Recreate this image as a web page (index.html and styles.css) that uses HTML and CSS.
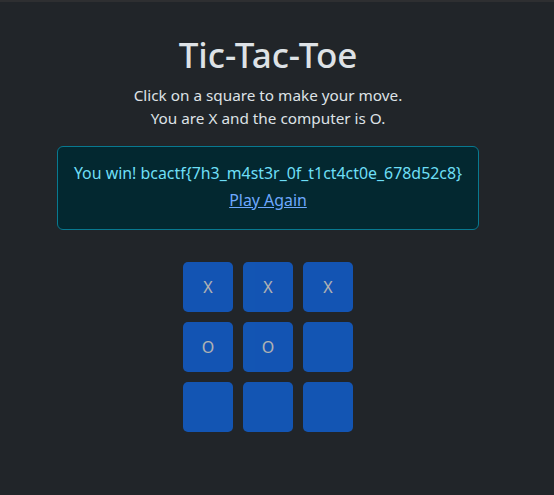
FILE: index.html
```html
<!DOCTYPE html>
<html>
<head>
<meta charset="utf-8">
<link rel="stylesheet" href="styles.css">
</head>
<body>
<div class="page">
  <h1 class="title">Tic-Tac-Toe</h1>
  <p class="lead">Click on a square to make your move.<br>You are X and the computer is O.</p>
  <div class="alert">
    <div>You win! bcactf{7h3_m4st3r_0f_t1ct4ct0e_678d52c8}</div>
    <a href="#" class="again">Play Again</a>
  </div>
  <div class="board">
    <button class="cell" disabled>X</button>
    <button class="cell" disabled>X</button>
    <button class="cell" disabled>X</button>
    <button class="cell" disabled>O</button>
    <button class="cell" disabled>O</button>
    <button class="cell" disabled></button>
    <button class="cell" disabled></button>
    <button class="cell" disabled></button>
    <button class="cell" disabled></button>
  </div>
</div>
</body>
</html>
```
FILE: styles.css
```css
html, body {
  margin: 0;
  height: 100%;
}
body {
  background: #212529;
  color: #dee2e6;
  font-family: "Noto Sans", "DejaVu Sans", sans-serif;
  font-size: 16px;
  line-height: 1.5;
  border-top: 2px solid #2e2f31;
  box-sizing: border-box;
}
.page {
  width: 536px;
  display: flex;
  flex-direction: column;
  align-items: center;
  padding-top: 32px;
}
.title {
  margin: 0 0 8px;
  font-size: 35px;
  font-weight: 500;
  line-height: 1.2;
  color: #dee2e6;
}
.lead {
  margin: 0 0 16px;
  text-align: center;
  font-size: 15.3px;
  line-height: 23px;
}
.alert {
  width: 422px;
  box-sizing: border-box;
  padding: 13px 8px 15px;
  border: 1px solid #087990;
  border-radius: 6px;
  background: #032830;
  color: #6edff6;
  text-align: center;
  font-size: 15.9px;
  line-height: 27px;
}
.again {
  color: #6ea8fe;
}
.board {
  margin-top: 32px;
  display: grid;
  grid-template-columns: repeat(3, 50px);
  grid-auto-rows: 50px;
  gap: 10px;
}
.cell {
  border: none;
  border-radius: 5px;
  background: #0d6efd;
  opacity: 0.65;
  color: #fff;
  font-family: inherit;
  font-size: 16px;
  padding: 0;
}
```
